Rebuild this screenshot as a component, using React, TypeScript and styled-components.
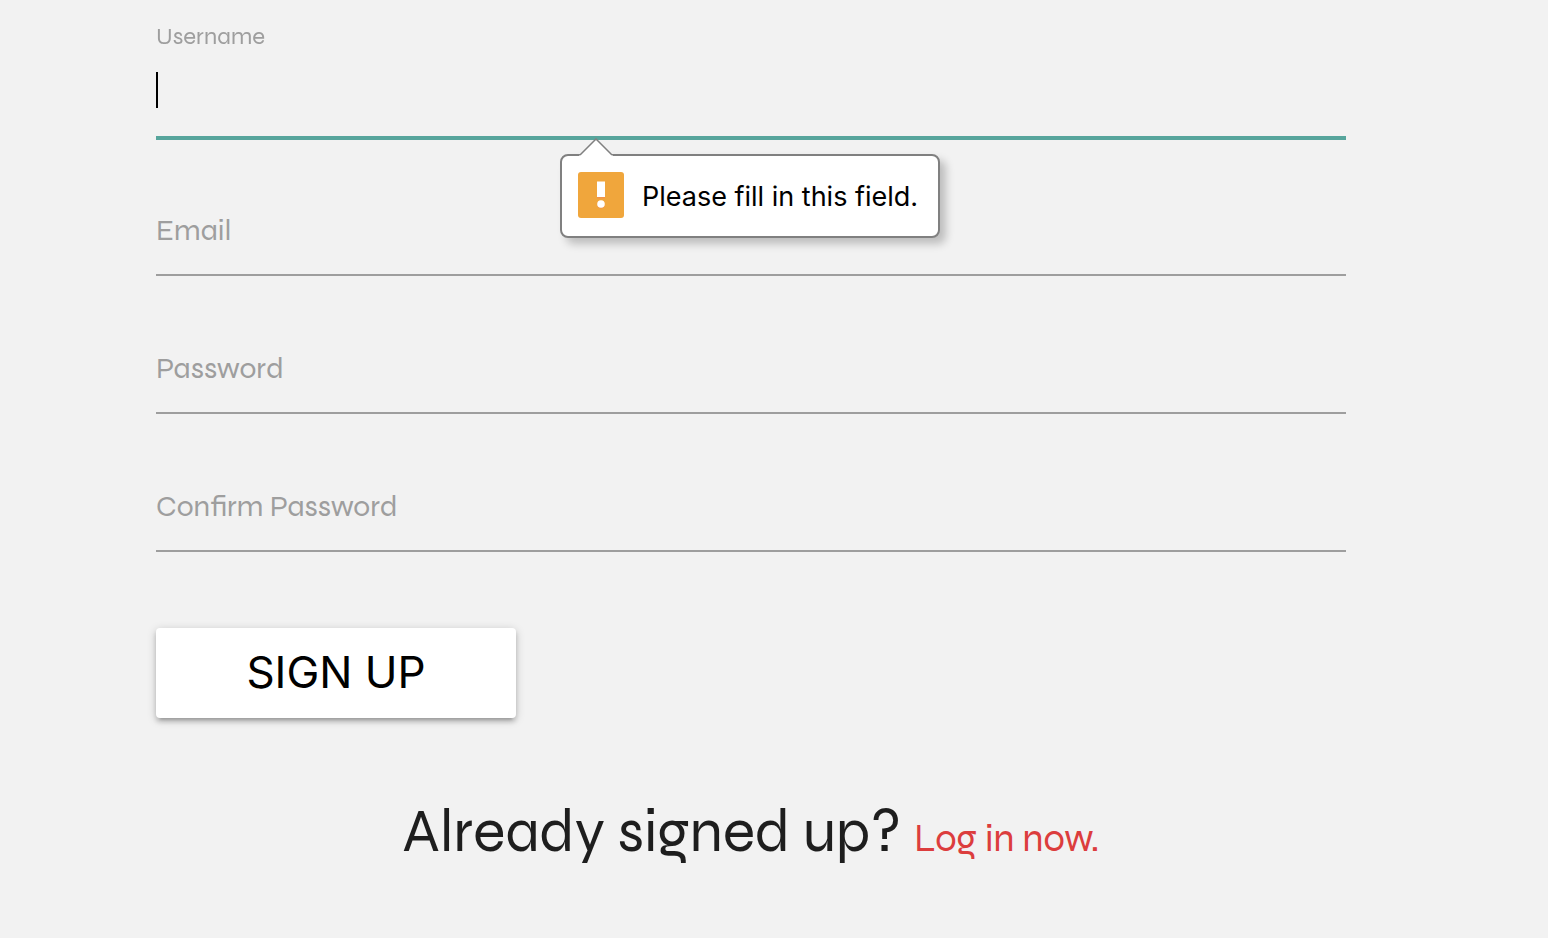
import React from 'react';
import styled, { createGlobalStyle, css } from 'styled-components';

const GlobalStyle = createGlobalStyle`
  *, *::before, *::after { box-sizing: border-box; }
  body {
    margin: 0;
    background: #f2f2f2;
    color: #1e1e1e;
    font-family: Syne, Lato, sans-serif;
  }
`;

const Page = styled.main`
  padding: 22px 202px 64px 156px;
`;

const Form = styled.form`
  display: flex;
  flex-direction: column;
  gap: 44px;
`;

const Field = styled.div`
  position: relative;
  display: grid;
`;

const Label = styled.label<{ $raised?: boolean }>`
  grid-area: 1 / 1;
  align-self: start;
  justify-self: start;
  z-index: 1;
  color: #9e9e9e;
  font-weight: 400;
  ${({ $raised }) =>
    $raised
      ? css`
          font-size: 24px;
          line-height: 30px;
        `
      : css`
          font-size: 30px;
          line-height: 36px;
          padding-top: 30px;
        `}
`;

const TextInput = styled.input<{ $active?: boolean }>`
  grid-area: 1 / 1;
  width: 100%;
  height: ${({ $active }) => ($active ? 116 : 94)}px;
  padding: 28px 0 8px;
  border: 0;
  border-bottom: 2px solid ${({ $active }) => ($active ? '#57a59c' : '#9e9e9e')};
  box-shadow: ${({ $active }) => ($active ? '0 2px 0 #57a59c' : 'none')};
  border-radius: 0;
  outline: none;
  background: transparent;
  caret-color: transparent;
  font: 400 32px/36px Lato, sans-serif;
`;

const Caret = styled.span`
  grid-area: 1 / 1;
  width: 2px;
  height: 36px;
  margin-top: 50px;
  background: #000;
`;

const Tooltip = styled.div`
  position: absolute;
  top: 132px;
  left: 404px;
  z-index: 2;
  display: flex;
  align-items: center;
  gap: 18px;
  height: 84px;
  padding: 0 20px 2px 16px;
  border: 2px solid #808080;
  border-radius: 8px;
  background: #fff;
  box-shadow: 6px 6px 8px rgba(0, 0, 0, 0.22);
  color: #000;
  font: 400 27px/36px Inter, sans-serif;
  white-space: nowrap;
`;

const Message = styled.span`
  padding-top: 4px;
`;

const Pointer = styled.svg`
  position: absolute;
  top: -18px;
  left: 17px;
`;

const SubmitButton = styled.button`
  align-self: flex-start;
  width: 360px;
  height: 90px;
  margin-top: 32px;
  padding: 0 0 2px;
  border: 0;
  border-radius: 4px;
  background: #fff;
  color: #000;
  font: 400 44px/88px Inter, sans-serif;
  box-shadow: 0 4px 4px rgba(0, 0, 0, 0.14), 0 6px 2px -4px rgba(0, 0, 0, 0.12),
    0 2px 10px rgba(0, 0, 0, 0.2);
`;

const Prompt = styled.h3`
  margin: 82px 0 0;
  text-align: center;
  font-size: 60px;
  line-height: 64px;
  font-weight: 400;
`;

const LoginLink = styled.a`
  color: #dc3d3d;
  font-size: 38px;
  text-decoration: none;
`;

const fields = [
  { id: 'email', label: 'Email', type: 'email' },
  { id: 'password', label: 'Password', type: 'password' },
  { id: 'confirm', label: 'Confirm Password', type: 'password' },
];

export default function App() {
  return (
    <Page>
      <GlobalStyle />
      <Form noValidate onSubmit={(event) => event.preventDefault()}>
        <Field>
          <Label htmlFor="username" $raised>Username</Label>
          <TextInput id="username" type="text" required autoFocus $active aria-describedby="username-error" />
          <Caret aria-hidden="true" />
          <Tooltip id="username-error" role="alert">
            <Pointer width="34" height="20" viewBox="0 0 34 20" aria-hidden="true">
              <path d="M0 18L2 16L17 1L32 16L34 18V20H0Z" fill="#fff" />
              <path d="M1 17L17 1L33 17" fill="none" stroke="#808080" strokeWidth="1.5" />
            </Pointer>
            <svg width="46" height="46" viewBox="0 0 46 46" aria-hidden="true">
              <rect width="46" height="46" rx="3" fill="#f0a63c" />
              <rect x="19" y="9.5" width="8" height="15.5" fill="#fff" />
              <rect x="19" y="25" width="8" height="1.5" fill="#f1934a" />
              <circle cx="23" cy="32.8" r="3.8" fill="#f1934a" />
              <circle cx="23" cy="32" r="3.8" fill="#fff" />
            </svg>
            <Message>Please fill in this field.</Message>
          </Tooltip>
        </Field>
        {fields.map((field) => (
          <Field key={field.id}>
            <Label htmlFor={field.id}>{field.label}</Label>
            <TextInput id={field.id} type={field.type} required />
          </Field>
        ))}
        <SubmitButton type="submit">SIGN UP</SubmitButton>
      </Form>
      <Prompt>
        Already signed up? <LoginLink href="#login">Log in now.</LoginLink>
      </Prompt>
    </Page>
  );
}
